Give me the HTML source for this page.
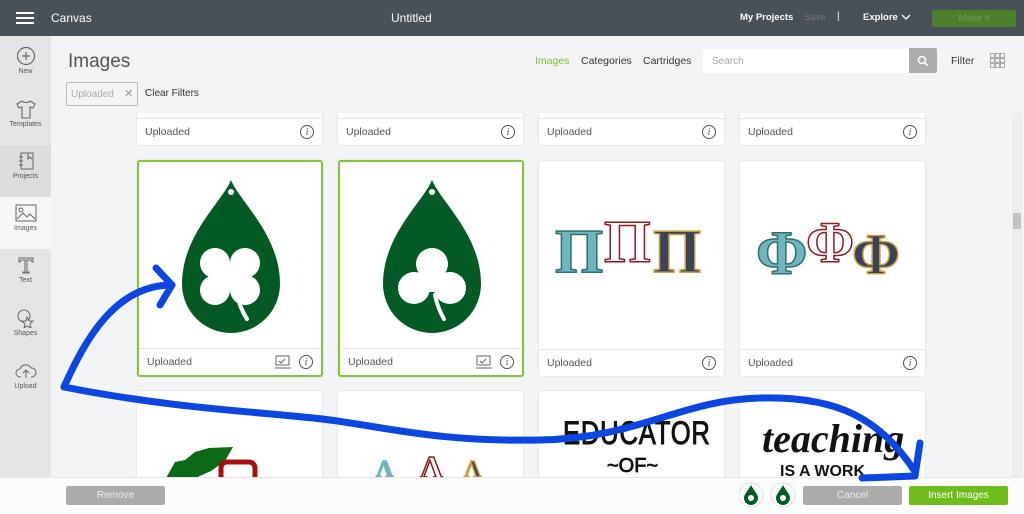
<!DOCTYPE html>
<html><head><meta charset="utf-8"><style>
*{box-sizing:border-box;margin:0;padding:0}
body{width:1024px;height:514px;overflow:hidden;font-family:"Liberation Sans",sans-serif;background:#f3f4f5;position:relative}
.top{position:absolute;left:0;top:0;width:1024px;height:36px;background:#485058;color:#fff}
.side{position:absolute;left:0;top:36px;width:51px;height:478px;background:#e4e5e6}
.si{position:absolute;left:0;width:51px;height:52px;text-align:center;font-size:7px;color:#555}
.si svg{display:block;margin:6px auto 2px}
.card{position:absolute;background:#fff;border-radius:3px;box-shadow:0 0 2px rgba(0,0,0,.12);overflow:hidden}
.lbl{position:absolute;left:0;right:0;bottom:0;height:27px;border-top:1px solid #e6e6e6;font-size:10.5px;color:#555;padding:7px 8px}
.info{position:absolute;right:8px;top:6px;width:14px;height:14px;border:1px solid #555;border-radius:50%;font:italic 10px "Liberation Serif",serif;text-align:center;line-height:13px;color:#555}
.sel{border:2px solid #84c33a}
.greek{position:absolute;font-family:"Liberation Serif",serif;font-weight:bold;-webkit-text-stroke:1.5px}
</style></head><body>
<div class="top">
 <div style="position:absolute;left:16px;top:12px;width:18px;height:2px;background:#fff;box-shadow:0 5px 0 #fff,0 10px 0 #fff"></div>
 <div style="position:absolute;left:51px;top:11px;font-size:12px">Canvas</div>
 <div style="position:absolute;left:391px;top:11px;font-size:12px">Untitled</div>
 <div style="position:absolute;left:740px;top:12px;font-size:9.5px;font-weight:bold">My Projects</div>
 <div style="position:absolute;left:804px;top:12px;font-size:9.5px;color:#777">Save</div>
 <div style="position:absolute;left:837px;top:11px;font-size:10px">|</div>
 <div style="position:absolute;left:863px;top:12px;font-size:9.5px;font-weight:bold">Explore</div>
 <svg style="position:absolute;left:901px;top:14px" width="10" height="7"><path d="M1 1l4 4 4-4" stroke="#fff" fill="none" stroke-width="1.3"/></svg>
 <div style="position:absolute;left:932px;top:10px;width:84px;height:17px;background:#4e7f2e;border-radius:2px;color:#6e9a50;font-size:9.5px;text-align:center;line-height:17px">Make It</div>
</div>
<div class="side">
 <div class="si" style="top:4px"><svg width="20" height="20"><circle cx="10" cy="10" r="8.5" fill="none" stroke="#666" stroke-width="1.2"/><path d="M10 6v8M6 10h8" stroke="#666" stroke-width="1.2"/></svg>New</div>
 <div class="si" style="top:57px"><svg width="22" height="20"><path d="M7 2l-5 3 2 4 3-1v11h8V8l3 1 2-4-5-3c-1 2-6 2-8 0z" fill="none" stroke="#666" stroke-width="1.1"/></svg>Templates</div>
 <div class="si" style="top:109px;background:#dcdddf"><svg width="20" height="20"><rect x="5" y="2" width="12" height="16" fill="none" stroke="#666"/><path d="M3 6h4M3 10h4M3 14h4M12 2v6l2-2 2 2" stroke="#666" fill="none"/></svg>Projects</div>
 <div class="si" style="top:161px;background:#f7f7f8"><svg width="24" height="20"><rect x="2" y="2" width="20" height="16" fill="none" stroke="#666"/><circle cx="7" cy="7" r="2" fill="none" stroke="#666"/><path d="M3 16l6-6 4 4 3-3 5 5" fill="none" stroke="#666"/></svg>Images</div>
 <div class="si" style="top:213px"><svg width="20" height="20"><path d="M3 3h14v4h-1l-1-2h-4v12h2v1H7v-1h2V5H5L4 7H3z" fill="none" stroke="#666"/></svg>Text</div>
 <div class="si" style="top:266px"><svg width="20" height="20"><circle cx="8" cy="8" r="6" fill="none" stroke="#666"/><path d="M11 9l2 4 4 0-3 3 1 4-4-2-3 2 1-4-3-3 4 0z" fill="#e4e5e6" stroke="#666"/></svg>Shapes</div>
 <div class="si" style="top:319px"><svg width="22" height="20"><path d="M6 16h-1a4 4 0 0 1 0-8 6 6 0 0 1 11-1 4.5 4.5 0 0 1 1 9h-1" fill="none" stroke="#666"/><path d="M11 17v-7M8 12l3-3 3 3" fill="none" stroke="#666"/></svg>Upload</div>
 <svg style="position:absolute;left:12px;top:447px" width="22" height="16"><path d="M2 2h17v9H9l-5 4v-4H2z" fill="#777"/></svg>
</div>
<div style="position:absolute;left:68px;top:51px;font-size:19px;color:#555">Images</div>
<div style="position:absolute;left:535px;top:55px;font-size:10.5px;color:#7cba3c">Images</div>
<div style="position:absolute;left:581px;top:55px;font-size:10.5px;color:#333">Categories</div>
<div style="position:absolute;left:643px;top:55px;font-size:10.5px;color:#333">Cartridges</div>
<div style="position:absolute;left:703px;top:49px;width:206px;height:24px;background:#fff;border-radius:2px;font-size:10px;color:#aaa;padding:7px 9px">Search</div>
<div style="position:absolute;left:909px;top:48px;width:28px;height:25px;background:#acacac;border-radius:0 2px 2px 0"><svg style="margin:7px 8px" width="12" height="12"><circle cx="5" cy="5" r="3.5" fill="none" stroke="#fff" stroke-width="1.6"/><path d="M7.5 7.5l3 3" stroke="#fff" stroke-width="1.8"/></svg></div>
<div style="position:absolute;left:951px;top:55px;font-size:10.5px;color:#333">Filter</div>
<svg style="position:absolute;left:990px;top:53px" width="15" height="15"><g fill="none" stroke="#999" stroke-width=".8"><rect x=".5" y=".5" width="4" height="4"/><rect x="5.5" y=".5" width="4" height="4"/><rect x="10.5" y=".5" width="4" height="4"/><rect x=".5" y="5.5" width="4" height="4"/><rect x="5.5" y="5.5" width="4" height="4"/><rect x="10.5" y="5.5" width="4" height="4"/><rect x=".5" y="10.5" width="4" height="4"/><rect x="5.5" y="10.5" width="4" height="4"/><rect x="10.5" y="10.5" width="4" height="4"/></g></svg>
<div style="position:absolute;left:66px;top:82px;width:72px;height:24px;border:1px solid #bbb;border-radius:2px;font-size:10px;color:#aaa;padding:6px 4px">Uploaded <span style="font-size:15px;position:absolute;right:4px;top:2px;color:#999">×</span></div>
<div style="position:absolute;left:145px;top:88px;font-size:10px;color:#333">Clear Filters</div>

<div style="position:absolute;left:51px;top:113px;width:961px;height:364px;overflow:hidden">
 <div class="card" style="left:86px;top:-20px;width:185px;height:52px"><div class="lbl">Uploaded<div class="info">i</div></div></div>
 <div class="card" style="left:287px;top:-20px;width:185px;height:52px"><div class="lbl">Uploaded<div class="info">i</div></div></div>
 <div class="card" style="left:488px;top:-20px;width:185px;height:52px"><div class="lbl">Uploaded<div class="info">i</div></div></div>
 <div class="card" style="left:689px;top:-20px;width:185px;height:52px"><div class="lbl">Uploaded<div class="info">i</div></div></div>

 <div class="card sel" style="left:86px;top:47px;width:186px;height:217px">
  <svg style="position:absolute;left:43px;top:18px" width="98" height="153" viewBox="0 0 98 153"><path d="M49 0C40 22 0 55 0 104a49 49 0 0 0 98 0C98 55 58 22 49 0z" fill="#045a24"/><circle cx="49" cy="12" r="3" fill="#fff"/><g fill="#fff"><circle cx="33" cy="83" r="15"/><circle cx="63" cy="83" r="15"/><circle cx="33" cy="110" r="15"/><circle cx="63" cy="110" r="15"/><rect x="33" y="84" width="30" height="26"/></g><path d="M55 115q3 13 10 24" stroke="#fff" stroke-width="4" fill="none" stroke-linecap="round"/></svg>
  <div class="lbl">Uploaded<div class="info">i</div><svg style="position:absolute;right:30px;top:6px" width="16" height="14"><rect x="1" y="1" width="13" height="9" fill="none" stroke="#666"/><path d="M0 13h16M4 6l2 2 4-4" stroke="#666" fill="none"/></svg></div>
 </div>
 <div class="card sel" style="left:287px;top:47px;width:186px;height:217px">
  <svg style="position:absolute;left:43px;top:18px" width="98" height="153" viewBox="0 0 98 153"><path d="M49 0C40 22 0 55 0 104a49 49 0 0 0 98 0C98 55 58 22 49 0z" fill="#045a24"/><circle cx="49" cy="12" r="3" fill="#fff"/><g fill="#fff"><circle cx="49" cy="84" r="16"/><circle cx="31" cy="108" r="16"/><circle cx="67" cy="108" r="16"/><rect x="36" y="88" width="26" height="24"/></g><path d="M52 115q3 14 9 24" stroke="#fff" stroke-width="4" fill="none" stroke-linecap="round"/></svg>
  <div class="lbl">Uploaded<div class="info">i</div><svg style="position:absolute;right:30px;top:6px" width="16" height="14"><rect x="1" y="1" width="13" height="9" fill="none" stroke="#666"/><path d="M0 13h16M4 6l2 2 4-4" stroke="#666" fill="none"/></svg></div>
 </div>
 <div class="card" style="left:488px;top:48px;width:185px;height:215px">
  <span class="greek" style="left:16px;top:56px;font-size:62px;color:#6fb6bd;-webkit-text-stroke-color:#2e6e72">Π</span>
  <span class="greek" style="left:65px;top:47px;font-size:60px;color:#fff;-webkit-text-stroke-color:#8b1a22">Π</span>
  <span class="greek" style="left:114px;top:56px;font-size:62px;color:#3b4256;-webkit-text-stroke-color:#c9a24a">Π</span>
  <div class="lbl">Uploaded<div class="info">i</div></div>
 </div>
 <div class="card" style="left:689px;top:48px;width:185px;height:215px">
  <span class="greek" style="left:16px;top:58px;font-size:62px;color:#6fb6bd;-webkit-text-stroke-color:#2e6e72">Φ</span>
  <span class="greek" style="left:66px;top:48px;font-size:58px;color:#fff;-webkit-text-stroke-color:#8b1a22">Φ</span>
  <span class="greek" style="left:112px;top:60px;font-size:58px;color:#3b4256;-webkit-text-stroke-color:#c9a24a">Φ</span>
  <div class="lbl">Uploaded<div class="info">i</div></div>
 </div>

 <div class="card" style="left:86px;top:278px;width:185px;height:120px">
  <svg style="position:absolute;left:26px;top:55px" width="110" height="40"><path d="M2 34l10-18 10-2 10-8 14-4 24-1-8 14-14 10-20 9z" fill="#0a6a17"/><rect x="58" y="16" width="34" height="30" rx="6" fill="none" stroke="#a51111" stroke-width="5"/></svg>
 </div>
 <div class="card" style="left:287px;top:278px;width:185px;height:120px">
  <span class="greek" style="left:38px;top:66px;font-size:24px;color:#6fb6bd">Λ</span>
  <span class="greek" style="left:82px;top:58px;font-size:32px;color:#fff;-webkit-text-stroke-color:#8b1a22">Λ</span>
  <span class="greek" style="left:126px;top:66px;font-size:24px;color:#3b4256;-webkit-text-stroke-color:#c9a24a">Λ</span>
 </div>
 <div class="card" style="left:488px;top:278px;width:185px;height:120px">
  <div style="position:absolute;left:24px;top:24px;font:32px 'Liberation Sans Narrow','Liberation Sans',sans-serif;color:#111;transform:scaleX(.8);transform-origin:left;letter-spacing:1px;-webkit-text-stroke:1px #111">EDUCATOR</div>
  <div style="position:absolute;left:68px;top:64px;font:20px 'Liberation Sans',sans-serif;color:#111;-webkit-text-stroke:.8px #111">~OF~</div>
 </div>
 <div class="card" style="left:689px;top:278px;width:185px;height:120px">
  <div style="position:absolute;left:22px;top:24px;font:italic bold 40px 'Liberation Serif',serif;color:#111">teaching</div>
  <div style="position:absolute;left:40px;top:72px;font:bold 16px 'Liberation Sans',sans-serif;color:#111">IS A WORK</div>
 </div>
</div>
<div style="position:absolute;left:1012px;top:113px;width:10px;height:364px;background:#eee"></div>
<div style="position:absolute;left:1013px;top:213px;width:8px;height:16px;background:#c2c2c2"></div>

<div style="position:absolute;left:0;top:477px;width:1024px;height:37px;background:#fcfcfc;border-top:1px solid #e6e6e6"></div>
<div style="position:absolute;left:66px;top:486px;width:99px;height:19px;background:#ababab;border-radius:2px;color:#eee;font-size:10px;text-align:center;line-height:19px">Remove</div>
<svg style="position:absolute;left:739px;top:482px" width="60" height="26"><circle cx="12" cy="13" r="12" fill="#fff" stroke="#ddd"/><circle cx="44" cy="13" r="12" fill="#fff" stroke="#ddd"/><path d="M12 3C9 9 5 12 5 16a7 7 0 0 0 14 0c0-4-4-7-7-13zM44 3c-3 6-7 9-7 13a7 7 0 0 0 14 0c0-4-4-7-7-13z" fill="#045a24"/><circle cx="12" cy="16" r="3" fill="#fff"/><circle cx="44" cy="16" r="3" fill="#fff"/></svg>
<div style="position:absolute;left:803px;top:486px;width:99px;height:19px;background:#ababab;border-radius:2px;color:#eee;font-size:10px;text-align:center;line-height:19px">Cancel</div>
<div style="position:absolute;left:909px;top:486px;width:99px;height:19px;background:#6fbd1d;border-radius:2px;color:#fff;font-size:10px;text-align:center;line-height:19px">Insert Images</div>

<svg style="position:absolute;left:0;top:0" width="1024" height="514">
 <g fill="none" stroke="#0b46e0" stroke-width="7" stroke-linecap="round" stroke-linejoin="round">
  <path d="M64 387C85 340 115 285 172 285"/>
  <path d="M156 268L172 285 160 305"/>
  <path d="M64 387C180 410 270 412 330 420S440 442 540 440S680 400 760 398S880 420 914 470"/>
  <path d="M920 443L915 476 862 478"/>
 </g>
</svg>
</body></html>
